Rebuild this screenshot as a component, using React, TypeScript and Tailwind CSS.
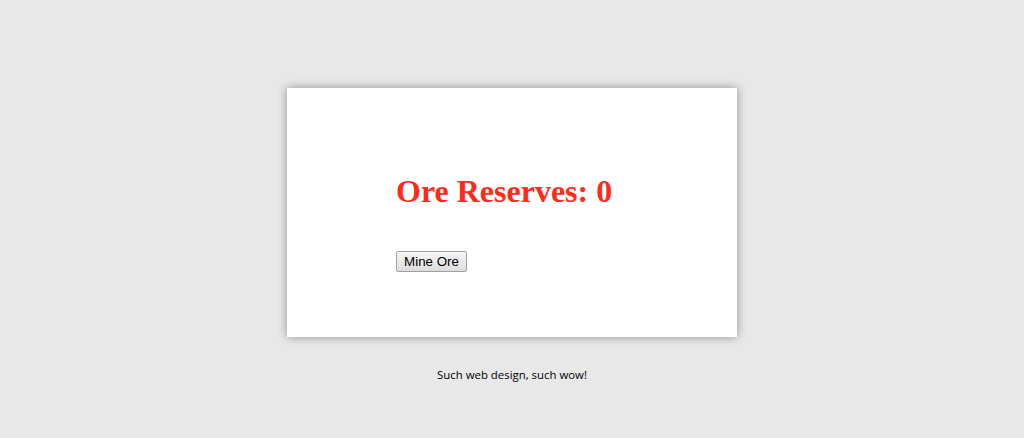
import React, { useState } from "react";

export default function App() {
  const [ore, setOre] = useState(0);
  return (
    <div className="min-h-[438px] w-full bg-[#e8e8e8] flex flex-col items-center pt-[88px]">
      <div className="w-[450px] h-[249px] bg-white shadow-[0_0_9px_rgba(0,0,0,0.38)] pl-[109px] pt-[85px]">
        <h1 className="m-0 text-[32px] leading-[37px] font-bold text-[#ff2a1a] font-['Liberation_Serif',serif]">
          Ore Reserves: {ore}
        </h1>
        <button
          onClick={() => setOre(ore + 1)}
          className="mt-[41px] h-[21px] w-[71px] border border-[#a0a0a0] rounded-[2px] bg-gradient-to-b from-[#f6f6f6] to-[#dddddd] text-[13.33px] leading-[19px] text-black font-['Liberation_Sans',sans-serif] p-0 flex items-center justify-center"
        >
          Mine Ore
        </button>
      </div>
      <p className="mt-[30px] text-[11.4px] leading-[16px] text-black font-['Open_Sans',sans-serif]">
        Such web design, such wow!
      </p>
    </div>
  );
}
